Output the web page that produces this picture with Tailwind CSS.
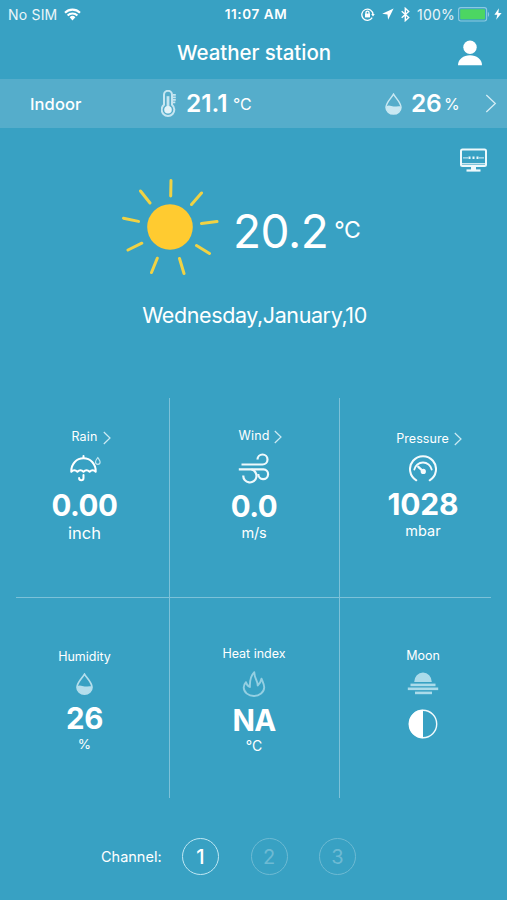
<!DOCTYPE html>
<html lang="en">
  <head>
    <meta charset="UTF-8" />
    <meta name="viewport" content="width=device-width, initial-scale=1.0" />
    <title>Weather station</title>
    <script src="https://cdn.jsdelivr.net/npm/@tailwindcss/browser@4"></script>
  </head>
  <body
    class="flex flex-col w-[507px] h-[900px] overflow-hidden bg-[#38a1c3] text-white font-['Inter',sans-serif]"
  >
    <!-- Status bar -->
    <div class="grid grid-cols-[1fr_auto_1fr] items-center h-7 pl-2 pr-[5px] text-[14px] text-white/90">
      <div class="flex items-center gap-[7px]">
        <span class="tracking-[0.2px]">No SIM</span>
        <svg width="17" height="13" viewBox="0 0 17 13" fill="none" stroke="white" stroke-width="2.1">
          <path d="M1 4.7a10.6 10.6 0 0 1 15 0" />
          <path d="M3.6 7.5a6.9 6.9 0 0 1 9.8 0" />
          <path d="M8.5 12.4L5.6 9.3a4.1 4.1 0 0 1 5.8 0z" fill="white" stroke="none" />
        </svg>
      </div>
      <span class="font-semibold text-[13.5px] tracking-[0.6px] text-white translate-x-px">11:07 AM</span>
      <div class="flex items-center justify-end">
        <svg class="mr-[7px]" width="14" height="13" viewBox="0 0 14 13" fill="none" stroke="white" stroke-width="1.3">
          <path d="M11.2 9.6a5.6 5.6 0 1 1 .8-3.2" />
          <path d="M10.2 6h3.6L12 8.6z" fill="white" stroke="none" />
          <rect x="4" y="5.6" width="5" height="3.8" fill="white" stroke="none" />
          <path d="M5 6V4.6a1.5 1.5 0 0 1 3 0V6" />
        </svg>
        <svg class="mr-[7px]" width="12" height="12" viewBox="0 0 12 12" fill="white">
          <path d="M11.6.4L.2 5.8l5.3.6.6 5.4z" />
        </svg>
        <svg class="mr-[7px]" width="9" height="15" viewBox="0 0 9 15" fill="none" stroke="white" stroke-width="1.4">
          <path d="M.7 4.2l7 6.4-3.4 3.1V1.3l3.4 3.1-7 6.4" />
        </svg>
        <span class="tracking-[0.2px]">100%</span>
        <svg class="ml-[3px] mr-1" width="32" height="15" viewBox="0 0 32 15">
          <rect x=".6" y=".6" width="28" height="13.4" rx="2.2" fill="none" stroke="#8cc9e2" stroke-width="1.1" />
          <rect x="2.2" y="2.3" width="24.8" height="10" rx=".8" fill="#4cd662" />
          <path d="M29.9 5c1.6.6 1.6 4.2 0 4.8z" fill="#8cc9e2" />
        </svg>
        <svg width="8" height="12" viewBox="0 0 8 12" fill="white">
          <path d="M4.9.3L.4 6.8h2.9L2.2 11.7 7.6 4.9H4.4z" />
        </svg>
      </div>
    </div>

    <!-- Title bar -->
    <header class="grid grid-cols-[1fr_auto_1fr] items-center h-[51px] pb-[2px] pr-[25px] pl-[26px]">
      <span></span>
      <h1 class="text-[20.5px] font-medium leading-6 tracking-[-0.05px]">Weather station</h1>
      <svg class="justify-self-end" width="24" height="26" viewBox="0 0 24 26" fill="white">
        <circle cx="12" cy="7.2" r="6.7" />
        <path d="M0 25.3C0 19 5.5 15.2 12 15.2S24 19 24 25.3z" />
      </svg>
    </header>

    <!-- Indoor readings -->
    <section class="flex items-center h-[49px] pl-[30px] pr-[10px] bg-[#55adcb]">
      <span class="w-[131px] pt-px text-[16.5px] font-medium tracking-[0.1px]">Indoor</span>
      <svg width="15" height="27" viewBox="0 0 15 27" fill="none" stroke="#c6e6f1">
        <path d="M3 14.8V4.8a4 4 0 0 1 8 0v10a6.3 6.3 0 1 1-8 0z" stroke-width="2" />
        <path d="M7 6.2v12" stroke-width="2.8" />
        <circle cx="7" cy="19.8" r="3.8" fill="#e3f4f9" stroke="none" />
        <path d="M12 4.8h2.8M12 7.3h2.8M12 9.8h2.8M12 12.3h2.3" stroke-width="1.7" />
      </svg>
      <span class="ml-[10px] w-[42px] text-[24.5px] font-semibold">21.1</span>
      <span class="ml-[5px] text-[16px]">°C</span>
      <svg class="ml-auto" width="17" height="22" viewBox="0 0 17 22">
        <path d="M8.5 1.2C6.6 4.6 1 9.6 1 14.2a7.5 6.9 0 0 0 15 0C16 9.6 10.4 4.6 8.5 1.2z" fill="none" stroke="#c9e8f2" stroke-width="1.5" />
        <path d="M1.2 13.3c3.3-1.7 5 .3 7.4.3 2.6 0 4.5-.8 7.3-.2.2 4.2-3.2 7.5-7.4 7.500S.9 17.500 1.200 13.300z" fill="#c9e8f2" />
      </svg>
      <span class="ml-[9px] w-[31px] text-[24.5px] font-semibold tracking-[-0.3px]">26</span>
      <span class="ml-[2px] w-[16px] text-[16px]">%</span>
      <svg class="ml-[25px]" width="12" height="19" viewBox="0 0 12 19" fill="none" stroke="#d5edf5" stroke-width="1.3">
        <path d="M1.3 1l9 8.5-9 8.5" />
      </svg>
    </section>

    <!-- Outdoor readings -->
    <section class="flex flex-col h-[270px]">
      <div class="flex justify-end pt-5 pr-5">
        <svg width="27" height="25" viewBox="0 0 27 25" fill="none" stroke="#eef9fc" stroke-width="2">
          <rect x="1" y="1.5" width="25" height="16.5" rx="1.5" />
          <path d="M2 15.8h23" stroke-width="1.2" />
          <path d="M3 9.8h5M19 9.8h5" stroke-width="1.2" stroke="#b9e0ed" />
          <path d="M8.5 9.8h2M12.5 9.8h2M16.5 9.8h2" stroke-width="2.5" />
          <path d="M13.5 18v4" stroke-width="5" />
          <path d="M6.5 22.500h14" stroke-width="2.2" />
        </svg>
      </div>
      <div class="flex items-center pl-[121px] pt-[5px]">
        <svg width="98" height="98" viewBox="0 0 98 98" stroke="#f0d244" stroke-width="3" stroke-linecap="round">
          <circle cx="49" cy="49" r="22.8" fill="#ffcb30" stroke="none" />
          <path d="M50 2.5L49.7 18M80.500 15L70.500 26.500M96 43.500L80.500 45.500M88.500 75.500L75.500 67.500M63 95.500L58.500 80.500M30.500 94.500L36.300 80.200M7 72L20.800 65.200M2.500 40.200L17.500 43.400M19.500 13L29 25" />
        </svg>
        <span class="ml-[14px] mt-2 text-[46px] leading-[56px] tracking-[-0.5px]">20.2</span>
        <span class="ml-[6px] mt-[7px] text-[23px] tracking-[-0.5px]">°C</span>
      </div>
      <p class="pt-[23px] pl-[2px] text-center text-[21.5px] leading-8 tracking-[-0.400px]">Wednesday,January,10</p>
    </section>

    <!-- Sensor grid -->
    <main class="flex flex-col h-[400px]">
      <div class="grid grid-cols-[169px_170px_168px] h-[199px]">
        <div class="flex flex-col items-center pt-[29px]">
          <div class="flex items-center gap-[5px] h-5 pl-[13px] pt-px text-[12.5px] tracking-[0.15px]">
            <span>Rain</span>
            <svg width="8" height="14" viewBox="0 0 8 14" fill="none" stroke="#cdeaf3" stroke-width="1.2"><path d="M.8 1l6.2 6-6.2 6" /></svg>
          </div>
          <svg class="mt-[7px]" width="32" height="28" viewBox="0 0 32 28" fill="none" stroke="white" stroke-width="2" stroke-linecap="round" stroke-linejoin="round">
            <path d="M2.300 17.800C2 9.500 7.800 4.300 14.500 4.300S27 9.500 26.700 17.800c-2-2.200-4.200-2.200-6.100 0-2-2.200-4.200-2.200-6.100 0-2-2.200-4.200-2.200-6.100 0-2-2.200-4.200-2.200-6.100 0z" />
            <path d="M14.500 2v2M14.500 21v3a2.200 2.200 0 0 1-4.400 0" />
            <path d="M28.800 3.500c-1.200 1.800-2.300 3-2.300 4.500a2.300 2.300 0 0 0 4.600 0c0-1.500-1.200-2.700-2.300-4.500z" stroke="#c3e5f0" stroke-width="1.200" />
          </svg>
          <span class="mt-[5px] text-[29.5px] leading-9 font-bold tracking-[-0.5px]">0.00</span>
          <span class="text-[16.5px] leading-5">inch</span>
        </div>
        <div class="flex flex-col items-center pt-[28px] pr-px border-l border-[#7cc1d8]">
          <div class="flex items-center gap-[5px] h-5 pl-[13px] pt-px text-[12.5px] tracking-[0.15px]">
            <span>Wind</span>
            <svg width="8" height="14" viewBox="0 0 8 14" fill="none" stroke="#cdeaf3" stroke-width="1.2"><path d="M.8 1l6.2 6-6.2 6" /></svg>
          </div>
          <svg class="mt-[6px]" width="32" height="32" viewBox="0 0 32 32" fill="none" stroke="#eef9fc" stroke-width="2.2">
            <path d="M3.5 12.5H24.5A5 5 0 1 0 19.500 7.500" />
            <path d="M.8 17.300H25.500A4.900 4.900 0 1 1 20.300 22" />
            <path d="M13.500 17.500A6.600 6.600 0 1 1 5.300 23.500" />
          </svg>
          <span class="mt-[4px] text-[29.5px] leading-9 font-bold tracking-[-0.5px]">0.0</span>
          <span class="mt-[-1px] text-[14.5px] leading-5 tracking-[-0.2px]">m/s</span>
        </div>
        <div class="flex flex-col items-center pt-[31px] pr-px border-l border-[#7cc1d8]">
          <div class="flex items-center gap-[5px] h-5 pl-[12px] text-[12.5px] tracking-[0.05px]">
            <span>Pressure</span>
            <svg width="8" height="14" viewBox="0 0 8 14" fill="none" stroke="#cdeaf3" stroke-width="1.2"><path d="M.8 1l6.2 6-6.2 6" /></svg>
          </div>
          <svg class="mt-[6px]" width="28" height="28" viewBox="0 0 28 28" fill="none" stroke="#f4fbfd" stroke-width="2" stroke-linecap="round">
            <path d="M7.300 25.300a13 13 0 1 1 13.400 0" />
            <path d="M5.300 14.500A8.900 8.900 0 0 1 22.700 14.500" stroke-width="1.800" />
            <path d="M9.300 11.800l4.500 4.200" stroke-width="2.300" />
            <circle cx="14.300" cy="16.400" r="2.600" fill="#f4fbfd" stroke="none" />
          </svg>
          <span class="mt-[3px] text-[30px] leading-9 font-bold tracking-[-0.2px]">1028</span>
          <span class="mt-[-1px] text-[14.5px] leading-5">mbar</span>
        </div>
      </div>

      <div class="h-px mx-4 bg-[#7cc1d8]"></div>

      <div class="grid grid-cols-[169px_170px_168px] h-[200px]">
        <div class="flex flex-col items-center pt-12">
          <span class="h-5 pt-px text-[12.5px] leading-5">Humidity</span>
          <svg class="mt-[7px]" width="17" height="22" viewBox="0 0 17 22">
            <path d="M8.500 1.200C6.600 4.600 1 9.600 1 14.200a7.500 6.900 0 0 0 15 0C16 9.600 10.400 4.600 8.500 1.200z" fill="none" stroke="#b4deec" stroke-width="1.700" />
            <path d="M1.200 13.300c3.300-1.700 5 .3 7.400.3 2.600 0 4.500-.8 7.300-.2.2 4.200-3.200 7.500-7.400 7.500S.9 17.500 1.200 13.300z" fill="#b4deec" />
          </svg>
          <span class="mt-[5px] text-[29.5px] leading-9 font-bold tracking-[-0.3px]">26</span>
          <span class="mt-[-2px] text-[13.5px] leading-5">%</span>
        </div>
        <div class="flex flex-col items-center pt-[46px] pr-px border-l border-[#7cc1d8]">
          <span class="text-[12.5px] leading-5">Heat index</span>
          <svg class="mt-[7px]" width="24" height="26" viewBox="0 0 24 26" fill="none" stroke="#94cfe2" stroke-width="1.9" stroke-linejoin="round">
            <path d="M12.300 1.200C9 4.500 7.600 9 7.900 16 5.800 15 4.500 13.500 4 11.200 2.400 13 1.700 14.500 1.700 16.500 1.900 21.500 6.500 25 12 25s10-3.600 10.200-8.500c.1-3-1.400-5.500-2.700-8.800-.6 2.800-1.700 5-3.800 6.800.2-4.500-3.600-7.500-3.400-13.300z" />
          </svg>
          <span class="mt-[5px] text-[29.5px] leading-9 font-bold tracking-[-0.8px]">NA</span>
          <span class="mt-[-2px] text-[14px] leading-5">°C</span>
        </div>
        <div class="flex flex-col items-center pt-[47px] pr-px border-l border-[#7cc1d8]">
          <span class="h-5 pt-px text-[12.5px] leading-5">Moon</span>
          <svg class="mt-[7px]" width="32" height="23" viewBox="0 0 32 23" fill="#abdbea">
            <path d="M7.200 10.100a8.800 9.600 0 0 1 17.600 0z" />
            <rect x="3.500" y="11.600" width="25" height="2.600" />
            <rect x=".8" y="15.500" width="30.400" height="2.600" />
            <rect x="8" y="19.600" width="17" height="2.600" />
          </svg>
          <svg class="mt-[14px]" width="30" height="30" viewBox="0 0 30 30">
            <circle cx="15" cy="15" r="13.700" fill="none" stroke="#f4fbfd" stroke-width="1.4" />
            <path d="M15 .8a14.200 14.200 0 0 0 0 28.400z" fill="white" />
          </svg>
        </div>
      </div>
    </main>

    <!-- Channel picker -->
    <footer class="flex items-center pt-10 pl-[101px]">
      <span class="w-[81px] text-[14.5px]">Channel:</span>
      <div class="flex gap-[31.5px] text-[20px]">
        <button class="size-[37px] rounded-full border-[1.5px] border-[#bfe7f3] font-medium">1</button>
        <button class="size-[37px] rounded-full border border-[#6dbad3] text-[#6dbad3]">2</button>
        <button class="size-[37px] rounded-full border border-[#6dbad3] text-[#6dbad3]">3</button>
      </div>
    </footer>
  </body>
</html>
